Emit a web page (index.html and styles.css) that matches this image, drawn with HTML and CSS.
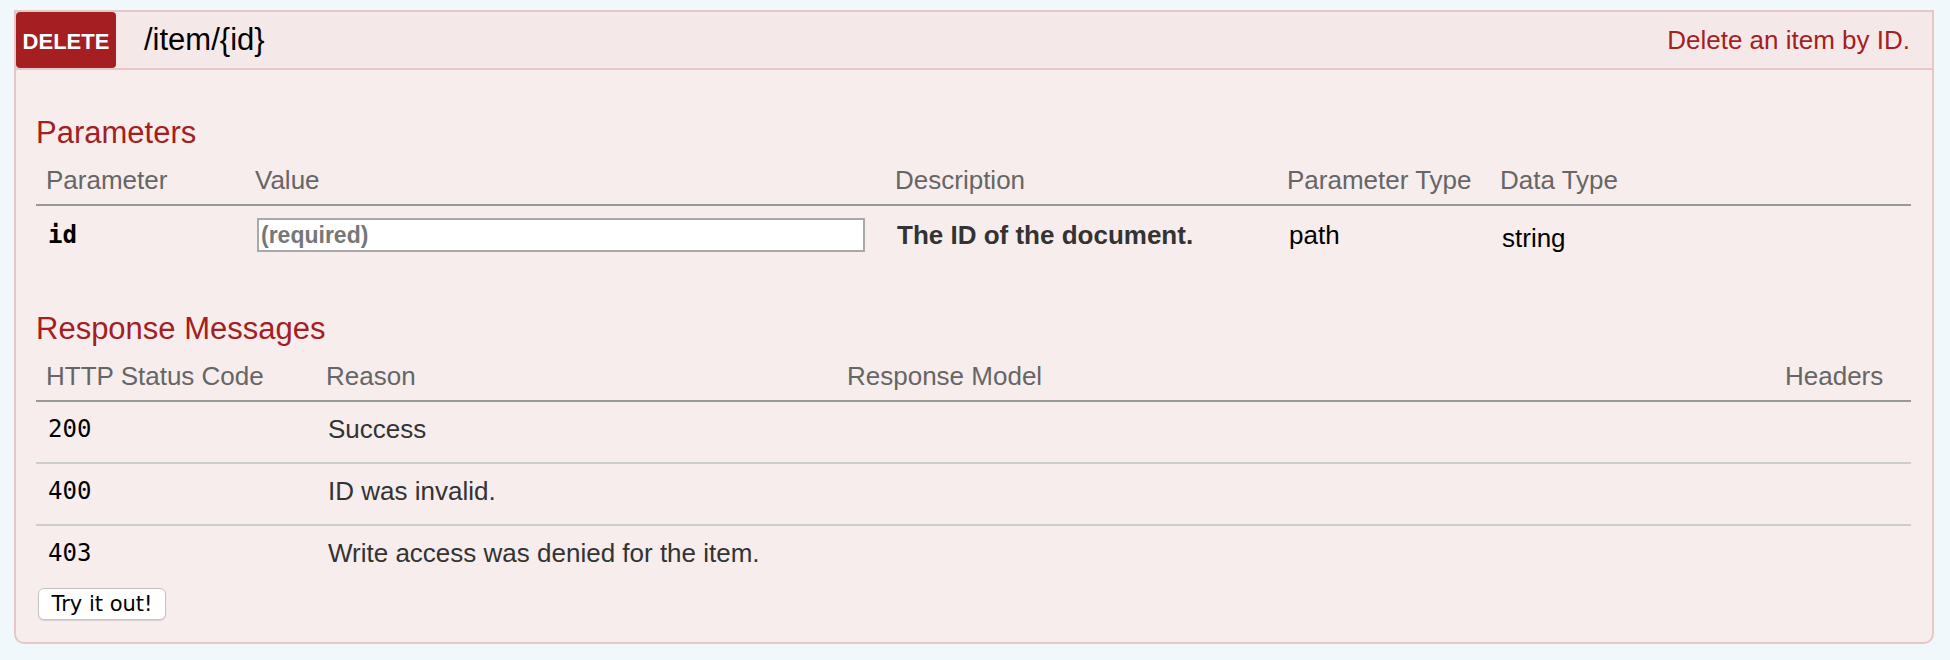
FILE: index.html
```html
<!DOCTYPE html>
<html>
<head>
<meta charset="utf-8">
<link rel="stylesheet" href="styles.css">
</head>
<body>
<div class="op">
  <div class="heading">
    <span class="method">DELETE</span>
    <span class="path">/item/{id}</span>
    <span class="summary">Delete an item by ID.</span>
  </div>
  <div class="content">
    <h4 class="first">Parameters</h4>
    <table class="tbl params">
      <colgroup>
        <col class="p1"><col class="p2"><col class="p3"><col class="p4"><col class="p5">
      </colgroup>
      <thead>
        <tr><th>Parameter</th><th>Value</th><th>Description</th><th>Parameter Type</th><th>Data Type</th></tr>
      </thead>
      <tbody>
        <tr>
          <td class="code bold">id</td>
          <td><input class="req" type="text" placeholder="(required)"></td>
          <td class="desc">The ID of the document.</td>
          <td class="plain">path</td>
          <td class="plain dtype">string</td>
        </tr>
      </tbody>
    </table>
    <h4 class="second">Response Messages</h4>
    <table class="tbl responses">
      <colgroup>
        <col class="r1"><col class="r2"><col class="r3"><col class="r4">
      </colgroup>
      <thead>
        <tr><th>HTTP Status Code</th><th>Reason</th><th>Response Model</th><th>Headers</th></tr>
      </thead>
      <tbody>
        <tr><td class="code">200</td><td>Success</td><td></td><td></td></tr>
        <tr><td class="code">400</td><td>ID was invalid.</td><td></td><td></td></tr>
        <tr><td class="code">403</td><td>Write access was denied for the item.</td><td></td><td></td></tr>
      </tbody>
    </table>
    <button class="try" type="button">Try it out!</button>
  </div>
</div>
</body>
</html>
```

FILE: styles.css
```css
html, body {
  margin: 0;
  padding: 0;
  background: #f0f8fb;
}
body {
  padding: 10px 16px 0 14px;
  font-family: "Liberation Sans", Arial, Helvetica, sans-serif;
}
.op {
  width: 1920px;
}
.heading {
  display: flex;
  align-items: center;
  height: 56px;
  background: #f5e8e8;
  border: 2px solid #e8c6c7;
  padding-right: 22px;
}
.method {
  width: 100px;
  height: 56px;
  box-sizing: border-box;
  padding-top: 3px;
  background: #a41e22;
  color: #fff;
  border-radius: 4px;
  font-size: 22px;
  font-weight: bold;
  display: flex;
  align-items: center;
  justify-content: center;
}
.path {
  padding-left: 28px;
  font-size: 31px;
  color: #000;
  flex: 1;
}
.summary {
  font-size: 26px;
  color: #a41e22;
}
.content {
  background: #f7eded;
  border: 2px solid #e8c6c7;
  border-top: none;
  border-radius: 0 0 10px 10px;
  padding: 0 21px 22px 20px;
}
h4 {
  margin: 0;
  font-size: 31px;
  line-height: 36px;
  font-weight: normal;
  color: #a41e22;
}
h4.first {
  padding-top: 45px;
}
h4.second {
  padding-top: 38px;
}
.tbl {
  width: 100%;
  table-layout: fixed;
  border-collapse: separate;
  border-spacing: 0;
}
.p1 { width: 209px; }
.p2 { width: 640px; }
.p3 { width: 392px; }
.p4 { width: 213px; }
.p5 { width: 421px; }
.r1 { width: 280px; }
.r2 { width: 521px; }
.r3 { width: 938px; }
.r4 { width: 136px; }
.tbl th {
  text-align: left;
  font-weight: normal;
  font-size: 26px;
  line-height: 30px;
  color: #666;
  padding: 14px 10px 9px;
  border-bottom: 2px solid #999;
}
.tbl td {
  font-size: 26px;
  color: #333;
  vertical-align: top;
  padding: 12px 12px 18px;
}
.params td {
  line-height: 34px;
}
.responses td {
  line-height: 30px;
}
.responses tr + tr td {
  border-top: 2px solid #cdcdcd;
}
.tbl td.code {
  font-family: "DejaVu Sans Mono", Menlo, monospace;
  font-size: 24px;
  color: #000;
}
.tbl td.bold {
  font-weight: bold;
}
.tbl td.desc {
  font-weight: bold;
  color: #333;
}
.tbl td.plain {
  color: #000;
}
.tbl td.dtype {
  padding-top: 15px;
}
.req {
  display: block;
  box-sizing: border-box;
  width: 608px;
  height: 34px;
  margin: 0;
  padding: 0 2px;
  border: 2px solid #a9a9a9;
  background: #fff;
  font-family: "Liberation Sans", Arial, sans-serif;
  font-size: 23px;
  font-weight: bold;
  color: #333;
}
.req::placeholder {
  color: #777;
}
.try {
  display: block;
  margin: 2px 0 0 2px;
  width: 128px;
  height: 32px;
  padding: 0;
  background: #fff;
  border: 1px solid #c4c4c4;
  border-radius: 6px;
  box-shadow: 0 1px 1px rgba(0, 0, 0, 0.12);
  font-family: "DejaVu Sans", sans-serif;
  font-size: 21px;
  color: #000;
}
```
